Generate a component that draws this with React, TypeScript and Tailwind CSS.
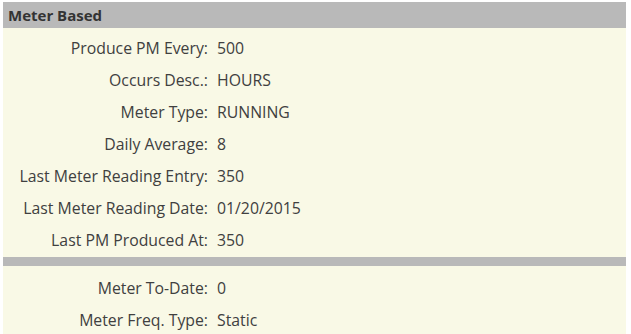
import React from "react";

const rows1: [string, string][] = [
  ["Produce PM Every:", "500"],
  ["Occurs Desc.:", "HOURS"],
  ["Meter Type:", "RUNNING"],
  ["Daily Average:", "8"],
  ["Last Meter Reading Entry:", "350"],
  ["Last Meter Reading Date:", "01/20/2015"],
  ["Last PM Produced At:", "350"],
];
const rows2: [string, string][] = [
  ["Meter To-Date:", "0"],
  ["Meter Freq. Type:", "Static"],
];

function Row({ label, value }: { label: string; value: string }) {
  return (
    <div className="flex h-8 items-center">
      <div className="w-[205px] shrink-0 text-right">{label}</div>
      <div className="pl-[9px]">{value}</div>
    </div>
  );
}

export default function App() {
  return (
    <div className="h-[334px] w-[631px] bg-white pl-[3px] pr-[5px] pt-[2px] text-[15.8px] text-[#404040]" style={{ fontFamily: '"Open Sans", "Noto Sans", sans-serif' }}>
      <div className="flex h-[26px] items-center bg-[#b9b9b9] pl-[5px] text-[15px] font-bold text-[#333]">Meter Based</div>
      <div className="h-[306px] bg-[#f9f9e6]">
        <div className="pt-[5px]">
          {rows1.map(([l, v]) => (
            <Row key={l} label={l} value={v} />
          ))}
        </div>
        <div className="h-[9px] bg-[#b9b9b9]" />
        <div className="pt-[7px]">
          {rows2.map(([l, v]) => (
            <Row key={l} label={l} value={v} />
          ))}
        </div>
      </div>
    </div>
  );
}
